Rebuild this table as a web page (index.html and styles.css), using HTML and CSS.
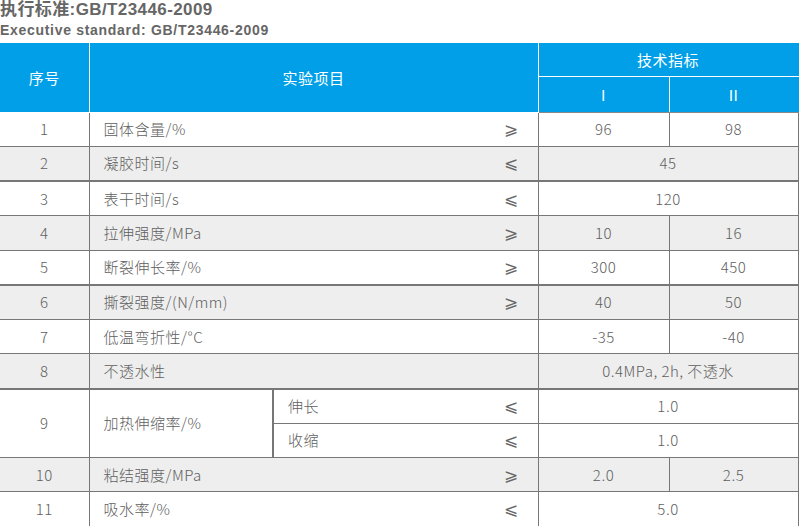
FILE: index.html
```html
<!DOCTYPE html>
<html lang="zh">
<head>
<meta charset="utf-8">
<link rel="stylesheet" href="styles.css">
</head>
<body>
<div class="title">
  <div class="t1">执行标准:GB/T23446-2009</div>
  <div class="t2">Executive standard: GB/T23446-2009</div>
</div>
<table class="spec">
  <colgroup>
    <col class="ca"><col class="cb1"><col class="cb2"><col class="cc"><col class="cd">
  </colgroup>
  <thead>
    <tr class="h1">
      <th rowspan="2" class="first">序号</th>
      <th rowspan="2" colspan="2">实验项目</th>
      <th colspan="2" class="last">技术指标</th>
    </tr>
    <tr class="h2">
      <th>I</th>
      <th class="last">II</th>
    </tr>
  </thead>
  <tbody>
    <tr><td class="num">1</td><td colspan="2"><div class="item"><span>固体含量/%</span><span class="sym">⩾</span></div></td><td>96</td><td>98</td></tr>
    <tr class="alt thick"><td class="num">2</td><td colspan="2"><div class="item"><span>凝胶时间/s</span><span class="sym">⩽</span></div></td><td colspan="2">45</td></tr>
    <tr><td class="num">3</td><td colspan="2"><div class="item"><span>表干时间/s</span><span class="sym">⩽</span></div></td><td colspan="2">120</td></tr>
    <tr class="alt"><td class="num">4</td><td colspan="2"><div class="item"><span>拉伸强度/MPa</span><span class="sym">⩾</span></div></td><td>10</td><td>16</td></tr>
    <tr class="thick"><td class="num">5</td><td colspan="2"><div class="item"><span>断裂伸长率/%</span><span class="sym">⩾</span></div></td><td>300</td><td>450</td></tr>
    <tr class="alt"><td class="num">6</td><td colspan="2"><div class="item"><span>撕裂强度/(N/mm)</span><span class="sym">⩾</span></div></td><td>40</td><td>50</td></tr>
    <tr><td class="num">7</td><td colspan="2"><div class="item"><span>低温弯折性/°C</span></div></td><td>-35</td><td>-40</td></tr>
    <tr class="alt thick"><td class="num">8</td><td colspan="2"><div class="item"><span>不透水性</span></div></td><td colspan="2">0.4MPa, 2h, 不透水</td></tr>
    <tr><td class="num" rowspan="2">9</td><td rowspan="2" class="txt">加热伸缩率/%</td><td><div class="item"><span>伸长</span><span class="sym">⩽</span></div></td><td colspan="2">1.0</td></tr>
    <tr><td><div class="item"><span>收缩</span><span class="sym">⩽</span></div></td><td colspan="2">1.0</td></tr>
    <tr class="alt"><td class="num">10</td><td colspan="2"><div class="item"><span>粘结强度/MPa</span><span class="sym">⩾</span></div></td><td>2.0</td><td>2.5</td></tr>
    <tr><td class="num">11</td><td colspan="2"><div class="item"><span>吸水率/%</span><span class="sym">⩽</span></div></td><td colspan="2">5.0</td></tr>
  </tbody>
</table>
</body>
</html>
```
FILE: styles.css
```css
html, body {
  margin: 0;
  padding: 0;
  background: #fff;
}
body {
  width: 800px;
  height: 526px;
  overflow: hidden;
  font-family: "Noto Sans CJK SC", "Noto Sans", sans-serif;
}
.title {
  color: #666;
  font-family: "Liberation Sans", "Noto Sans CJK SC", sans-serif;
  font-weight: bold;
  height: 43px;
}
.t1 {
  font-size: 17px;
  line-height: 20px;
  letter-spacing: 0.4px;
}
.t2 {
  font-size: 14px;
  line-height: 18px;
  letter-spacing: 0.7px;
  padding-top: 1px;
}
.spec {
  border-collapse: collapse;
  table-layout: fixed;
  width: 798px;
  color: #606060;
  font-size: 15px;
  font-weight: 300;
  letter-spacing: 0.5px;
}
.ca { width: 89px; }
.cb1 { width: 184px; }
.cb2 { width: 265px; }
.cc { width: 131px; }
.cd { width: 129px; }
.spec th {
  background: #009fe8;
  color: #fff;
  font-weight: normal;
  letter-spacing: 0.5px;
  border: 1px solid #fff;
  border-top: none;
  padding: 0;
  text-align: center;
  vertical-align: middle;
}
.spec th.first { border-left: none; }
.spec th.last { border-right: 1px solid #009fe8; }
.h1 { height: 33px; }
.h2 { height: 36px; }
.h2 th { border-bottom: 1px solid #888; }
.spec td {
  border: 1px solid #777;
  padding: 0;
  height: 33.25px;
  text-align: center;
  vertical-align: middle;
  line-height: 18px;
}
.spec td.num { border-left: none; }
.spec tr.alt td { background: #eeeeee; }
.spec tr.thick td { border-bottom: 2px solid #777; }
.spec td.txt {
  text-align: left;
  padding-left: 14px;
  border-right: 2px solid #777;
}
.item {
  display: flex;
  justify-content: space-between;
  align-items: center;
  padding: 0 19px 0 14px;
  text-align: left;
}
.sym {
  font-family: "DejaVu Sans", sans-serif;
  font-size: 17px;
  color: #666;
}
```
